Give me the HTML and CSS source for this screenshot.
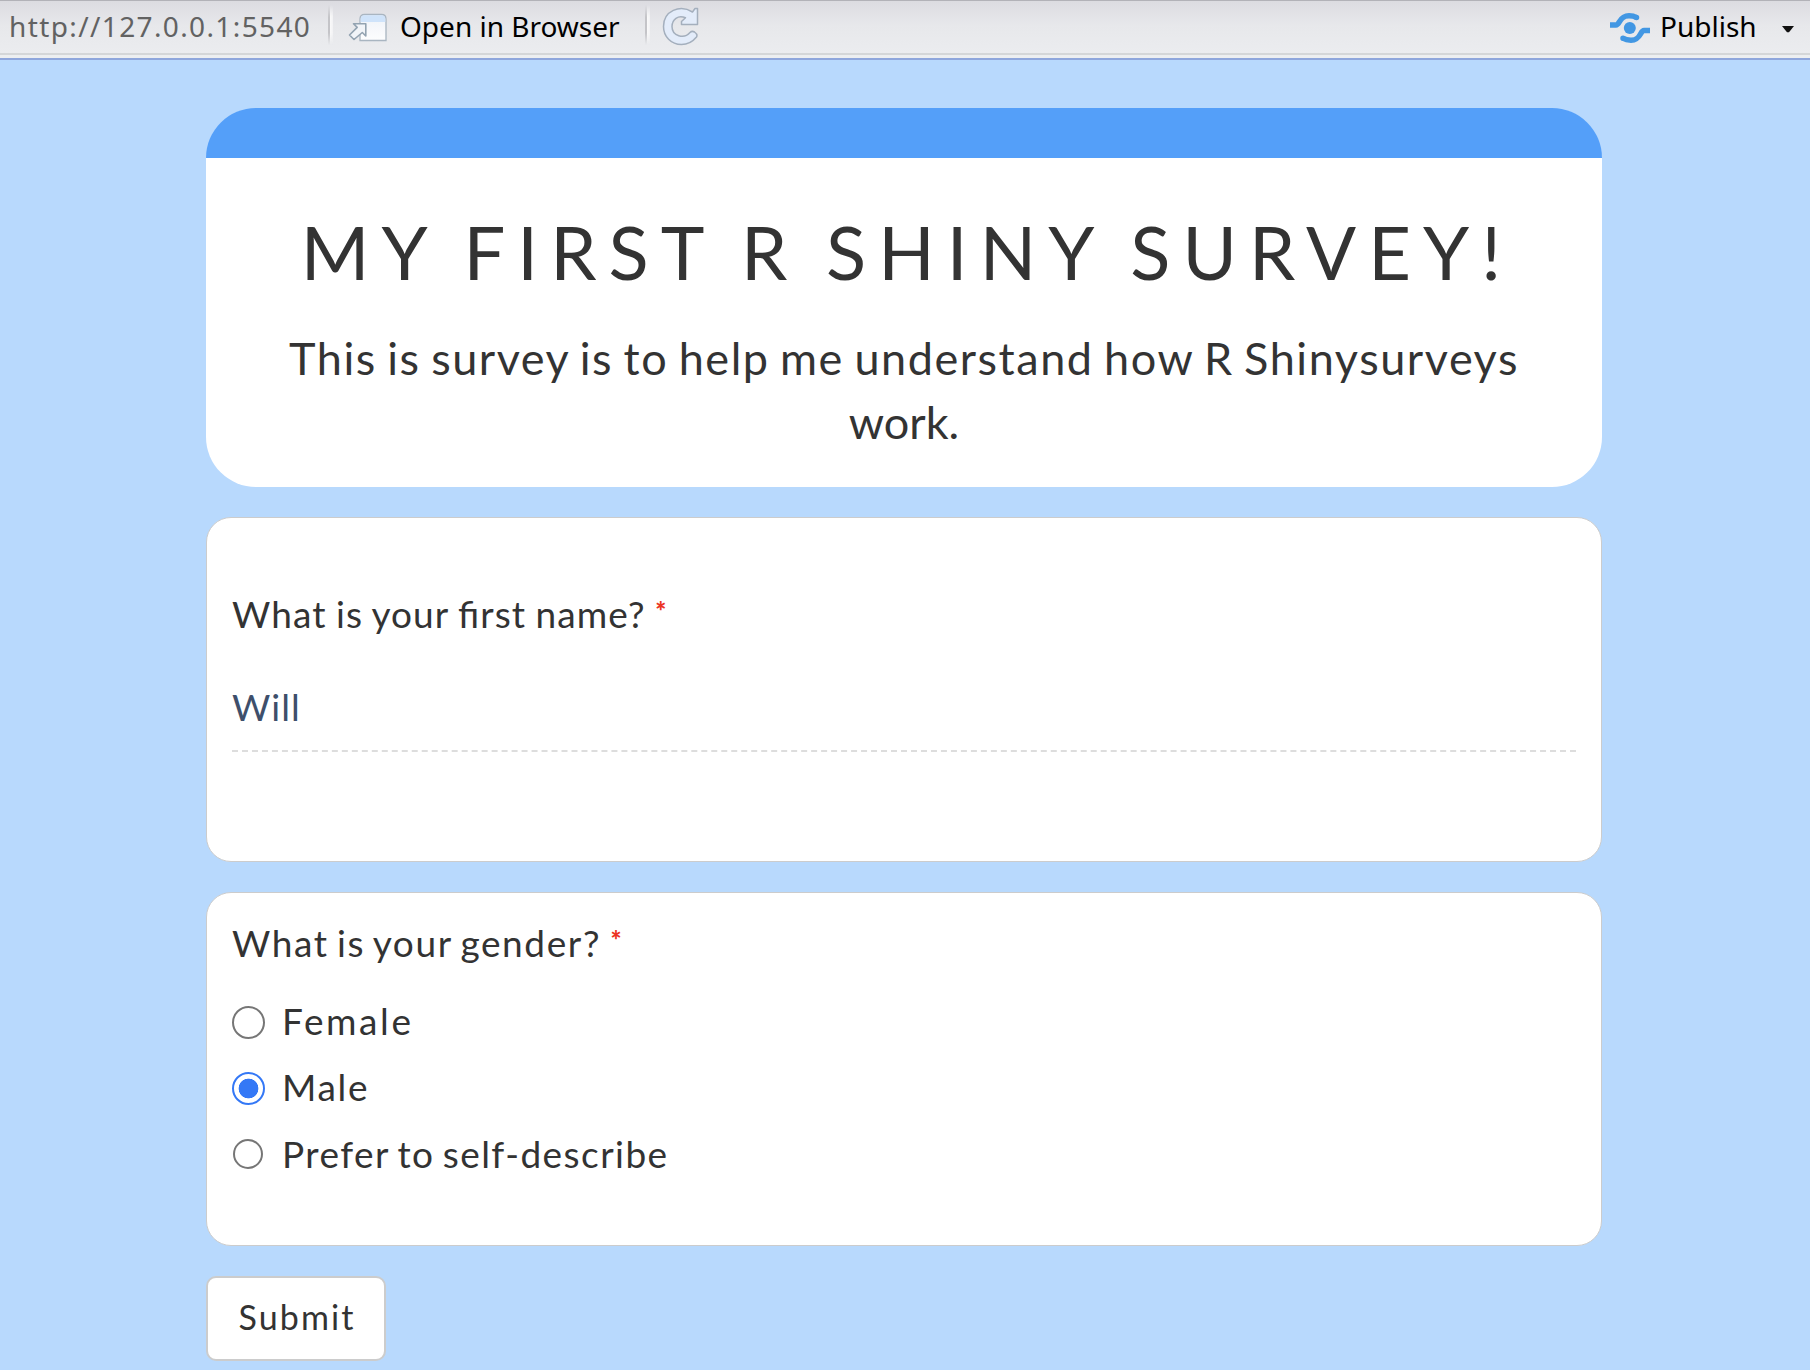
FILE: index.html
```html
<!DOCTYPE html>
<html lang="en">
<head>
<meta charset="utf-8">
<title>My First R Shiny Survey!</title>
<link rel="stylesheet" href="styles.css">
</head>
<body>
<header class="toolbar">
  <span class="url">http://127.0.0.1:5540</span>
  <span class="separator separator-first"></span>
  <svg class="icon-window" width="40" height="30" viewBox="0 0 40 30">
    <defs><linearGradient id="pane" x1="0" y1="0" x2="0" y2="1"><stop offset="0" stop-color="#eef2f8"/><stop offset="1" stop-color="#fdfdfe"/></linearGradient></defs>
    <path d="M12 27.500V6Q12 1.500 16.500 1.500H33.500Q38 1.500 38 6V27.500Z" fill="url(#pane)" stroke="#a9b5c1" stroke-width="1.300"/>
    <path d="M12.700 9V6Q12.700 2.200 16.500 2.200H33.500Q37.300 2.200 37.300 6V9Z" fill="#cfe3fa"/>
    <path d="M5.500 10.700H17.800V23L14.300 19.500L6 26.500L1.500 22L9.200 14.400Z" fill="#f1f4f8" stroke="#93a3b1" stroke-width="1.600" stroke-linejoin="round"/>
  </svg>
  <span class="command open-command">Open in Browser</span>
  <span class="separator separator-second"></span>
  <svg class="icon-reload" width="38" height="40" viewBox="0 0 38 40">
    <path d="M35.500 2.500V18.500H19.500V15.500L23.500 11.800C16 8.500 10 13.500 10 20.500C10 30 22 33.500 28 26.500Q30 24.500 32.500 26Q36 28.500 34.500 31C30 36.500 25 38.500 19.500 38.500C9 38.500 1.500 30.500 1.500 20.500C1.500 5 18 -2 30.500 6L33 2.500Z" fill="#e3ecfa" stroke="#a4afbd" stroke-width="1.500" stroke-linejoin="round"/>
  </svg>
  <svg class="icon-publish" width="40" height="32" viewBox="0 0 40 32">
    <g fill="none" stroke="#4297e3" stroke-width="5.500">
      <path d="M0 13H6C10 13 9 3.700 19 3.700Q23.500 3.700 26.500 5.500"/>
      <path d="M26.500 5.500h.01M13 26.300h.01" stroke-linecap="round"/>
      <path d="M40 18.500H34C30 18.500 31 28.200 21 28.200Q16 28.200 13 26.300"/>
    </g>
    <circle cx="19.800" cy="16" r="6" fill="#4297e3"/>
  </svg>
  <span class="command publish-command">Publish</span>
  <svg class="icon-caret" width="12" height="7" viewBox="0 0 12 7"><path d="M0 0H12L7 6.200H5Z" fill="#111"/></svg>
</header>
<main class="survey">
  <section class="intro">
    <h1 class="title">My First R Shiny Survey!</h1>
    <p class="description"><span class="lead">This is survey is to help me understand how R Shinysurveys</span> work.</p>
  </section>
  <section class="card card-name">
    <label class="question" for="name"><span class="text-name">What is your first name?</span> <span class="required">*</span></label>
    <input class="answer" id="name" type="text" value="Will">
  </section>
  <section class="card card-gender">
    <div class="question"><span class="text-gender">What is your gender?</span> <span class="required">*</span></div>
    <div class="options">
      <label class="option"><input class="radio" type="radio" name="gender"><span class="choice-female">Female</span></label>
      <label class="option"><input class="radio" type="radio" name="gender" checked><span class="choice-male">Male</span></label>
      <label class="option"><input class="radio radio-small" type="radio" name="gender"><span class="choice-other">Prefer to self-describe</span></label>
    </div>
  </section>
  <button class="submit" type="button">Submit</button>
</main>
</body>
</html>
```
FILE: styles.css
```css
* { box-sizing: border-box; }
body {
  margin: 0;
  height: 1370px;
  overflow: hidden;
  background: #b8d9fd;
  color: #333;
  font-family: Lato, sans-serif;
}
.toolbar {
  display: flex;
  align-items: flex-start;
  height: 60px;
  padding: 0 16px 0 9px;
  border-top: 1px solid #b2b2b8;
  border-bottom: 2px solid #8ea6dc;
  background: linear-gradient(#dcdce1 0, #e7e8eb 24px, #ebecef 52px, #d4d6d8 52px, #d4d6d8 54px, #eceef0 54px);
  font: 28px/38px "Noto Sans", sans-serif;
  white-space: nowrap;
}
.url { width: 301px; margin-top: 6px; color: #626262; letter-spacing: 1.380px; }
.command { margin-top: 6px; color: #000; }
.separator {
  width: 5px;
  height: 40px;
  margin-top: 4px;
  background: linear-gradient(90deg, #c4c4c8 2px, #fafafa 2px, #f2f2f4);
  -webkit-mask: linear-gradient(transparent, #000 30%, #000 70%, transparent);
  mask: linear-gradient(transparent, #000 30%, #000 70%, transparent);
}
.separator-first { margin-left: 18px; }
.icon-window { margin: 12px 0 0 15px; }
.open-command { width: 220px; margin-left: 12px; }
.separator-second { margin-left: 25px; }
.icon-reload { margin: 5px 0 0 12px; }
.icon-publish { margin: 11px 0 0 auto; }
.publish-command { width: 98px; margin-left: 10px; }
.icon-caret { margin: 25px 0 0 24px; }

.survey { width: 1396px; margin: 48px 0 0 206px; }
.intro {
  height: 379px;
  padding-top: 49px;
  border-top: 50px solid #549ff9;
  border-radius: 50px;
  background: #fff;
  text-align: center;
}
.title {
  margin: 0 0 29px;
  padding-left: 6px;
  font-size: 74px;
  font-weight: 400;
  line-height: 90px;
  letter-spacing: 12.100px;
  word-spacing: -4.500px;
  text-transform: uppercase;
  white-space: nowrap;
}
.description { margin: 0 auto; width: 1260px; font-size: 45px; line-height: 64px; }
.lead { letter-spacing: 1.550px; word-spacing: -2.600px; }
.card {
  margin-top: 30px;
  padding: 0 25px;
  border: 1px solid #ccc;
  border-radius: 25px;
  background: #fff;
  font-size: 37px;
  line-height: 52px;
}
.card-name { height: 345px; padding-top: 70px; }
.card-gender { height: 354px; padding-top: 24px; }
.question { display: block; }
.text-name { letter-spacing: 1.100px; word-spacing: -1.260px; font-feature-settings: "liga" 1; }
.text-gender { letter-spacing: 1.600px; word-spacing: -2.600px; }
.required {
  color: #ec3323;
  font-size: 26px;
  font-weight: 900;
  line-height: 0;
  vertical-align: 7px;
}
.answer {
  display: block;
  width: 100%;
  height: 72px;
  margin-top: 40px;
  padding: 0 0 17px;
  border: 0;
  border-bottom: 2px dashed #ddd;
  background: transparent;
  color: #3e4f6b;
  font: 37px/52px Lato, sans-serif;
  letter-spacing: 1.100px;
}
.options { display: grid; gap: 14.300px; margin-top: 26px; }
.option { display: flex; align-items: center; height: 52px; }
.radio {
  appearance: none;
  width: 33px;
  height: 33px;
  margin: 2px 17px 0 0;
  border: 2px solid #767676;
  border-radius: 50%;
}
.radio:checked { border-color: #3478f6; background: radial-gradient(circle, #3478f6 9.500px, #fff 10.200px); }
.radio-small { width: 30px; height: 30px; margin: 1px 19px 0 1px; }
.choice-female { letter-spacing: 2.600px; }
.choice-male { letter-spacing: 1.700px; }
.choice-other { letter-spacing: 1.450px; word-spacing: -2.700px; }
.submit {
  display: block;
  width: 180px;
  height: 85px;
  margin-top: 30px;
  padding: 0 0 4px 2px;
  border: 2px solid #ccc;
  border-radius: 10px;
  background: #fff;
  color: #333;
  font: 34px Lato, sans-serif;
  letter-spacing: 2.100px;
}
```
